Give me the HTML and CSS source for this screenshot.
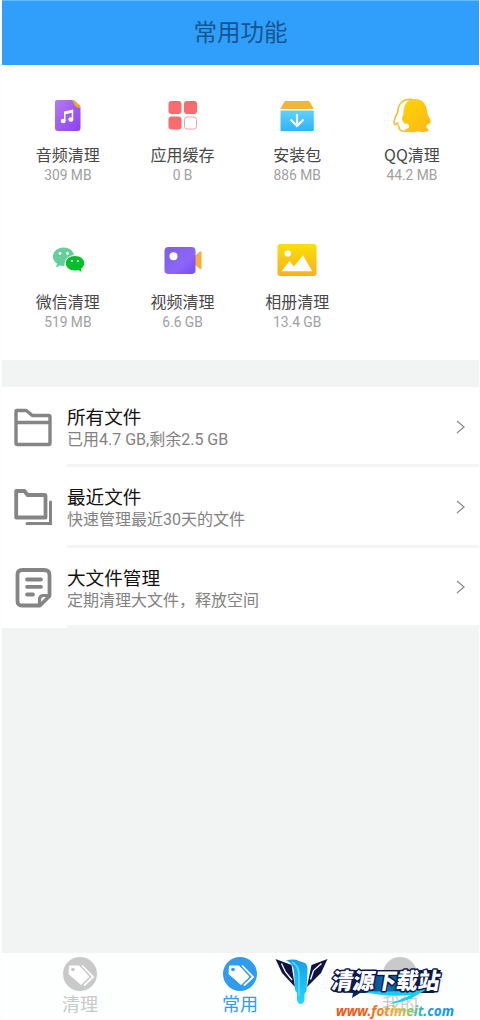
FILE: index.html
```html
<!DOCTYPE html>
<html lang="zh-CN">
<head>
<meta charset="utf-8">
<title>常用功能</title>
<link rel="stylesheet" href="styles.css">
</head>
<body>
<div class="app">
  <header class="header"><h1 class="header-title">常用功能</h1></header>
  <section class="tools">
    <div class="tool">
      <svg class="tool-icon" viewBox="0 0 48 40"><defs><linearGradient id="gp" x1="0" y1="0" x2="1" y2="1"><stop offset="0" stop-color="#b47bf2"/><stop offset="1" stop-color="#8c3ff2"/></linearGradient></defs><path fill="url(#gp)" d="M13 5h15l8.500 8v20q0 3-3 3H14q-3 0-3-3V7q0-2 2-2z"/><path fill="#eda52f" d="M28.500 5h1.500l6.500 6v2h-1.500q-5-1-6.500-8z"/><g fill="#fff"><ellipse cx="19.200" cy="26" rx="2.500" ry="2.200"/><ellipse cx="26.800" cy="24.500" rx="2.500" ry="2.200"/><path d="M20 16.500l9.200-2V24.500h-1.500v-6.700l-6.200 1.400V26H20z"/></g></svg>
      <span class="tool-name">音频清理</span><span class="tool-size">309 MB</span>
    </div>
    <div class="tool">
      <svg class="tool-icon" viewBox="0 0 48 40"><g fill="#f96b6e"><rect x="9.500" y="6" width="13" height="13" rx="3"/><rect x="25" y="6" width="13" height="13" rx="3"/><rect x="9.500" y="21.500" width="13" height="13" rx="3"/></g><rect x="25.500" y="22" width="12" height="12" rx="2.600" fill="#fff" stroke="#f7a0a2"/></svg>
      <span class="tool-name">应用缓存</span><span class="tool-size">0 B</span>
    </div>
    <div class="tool">
      <svg class="tool-icon" viewBox="0 0 48 40"><defs><linearGradient id="gb" x1="0" y1="0" x2="0" y2="1"><stop offset="0" stop-color="#5ed2fb"/><stop offset="1" stop-color="#2bb5f7"/></linearGradient></defs><path fill="#f3b43a" d="M12.500 6h23q.7 0 1 .6l4.300 7.400H7.200l4.300-7.400q.3-.6 1-.6z"/><path fill="url(#gb)" d="M7.500 15.500h33.300V35q0 1-1 1H8.500q-1 0-1-1z"/><path d="M24 19v11M17.500 24.500L24 31l6.500-6.500" fill="none" stroke="#fff" stroke-width="2.200"/></svg>
      <span class="tool-name">安装包</span><span class="tool-size">886 MB</span>
    </div>
    <div class="tool">
      <svg class="tool-icon" viewBox="0 0 48 40"><defs><linearGradient id="gq" x1="0" y1="0" x2="1" y2="1"><stop offset="0" stop-color="#ffd500"/><stop offset="1" stop-color="#fbb61d"/></linearGradient></defs><path fill="#fff" stroke="#f7bd3c" stroke-width="1.600" d="M24 4.500C14 3.500 9.800 10 9.800 17c-4 7-4.500 12-3 12.500 1 .5 2-1 3-1.500 0 2 1 3 1.500 4-1 3 3 4.500 7 4.500l7-4z"/><path fill="url(#gq)" d="M27 4C18 4 15.500 11 15.500 19c-3 5-1 8 2 10 3 0 4 2 3 4-1 1-3 1-4 2 1 2.500 9 3 13 1.200 4 1.500 11 .8 11-1.200 0-1-2-1.700-2-3 0-2 1-3 2-3 3-1 3-3-1-10C39 10 35 4 27 4z"/><path fill="#fff" d="M10 28l4 2.500 4-2q3 .5 2.500 2.500 0 2-4 3-5 0-6.500-6zM43 28l-5 4 2 1 3-2z"/></svg>
      <span class="tool-name">QQ清理</span><span class="tool-size">44.2 MB</span>
    </div>
    <div class="tool">
      <svg class="tool-icon" viewBox="0 0 48 40"><path fill="#63cf9b" d="M19.500 5.500C13.500 5.500 9 9.500 9 14.500c0 3 1.500 5.500 4 7l-1 4 4-2q2 .6 4.500.4c-.5-7 5-11 9.500-11C29 8.500 25 5.500 19.500 5.500z"/><path fill="#04bf2b" d="M31 14c-5.500 0-9.200 3.200-9.200 7.300s3.700 7.200 9.200 7.200q2 0 3.500-.5l3 2-.5-3.300c2-1.300 3.300-3.200 3.300-5.400 0-4.100-3.800-7.300-9.300-7.300z"/><g fill="#fff"><circle cx="16" cy="11.500" r="1.400"/><circle cx="23.500" cy="11.500" r="1.400"/><circle cx="28" cy="19" r="1.100"/><circle cx="33.800" cy="19" r="1.100"/></g></svg>
      <span class="tool-name">微信清理</span><span class="tool-size">519 MB</span>
    </div>
    <div class="tool">
      <svg class="tool-icon" viewBox="0 0 48 40"><defs><linearGradient id="gv" x1="0" y1="0" x2="1" y2="1"><stop offset="0" stop-color="#805ee0"/><stop offset=".6" stop-color="#8c65f8"/><stop offset="1" stop-color="#7a4bf4"/></linearGradient></defs><path fill="#f4af38" d="M35 14.500l6-5q1.500-.5 1.500 1v15.500q0 1.500-1.500 1l-6-4.500z"/><rect x="5.500" y="5" width="31" height="27" rx="4" fill="url(#gv)"/><circle cx="14.500" cy="14.300" r="4" fill="#fff"/></svg>
      <span class="tool-name">视频清理</span><span class="tool-size">6.6 GB</span>
    </div>
    <div class="tool">
      <svg class="tool-icon" viewBox="0 0 48 40"><defs><linearGradient id="gy" x1="0" y1="0" x2="0" y2="1"><stop offset="0" stop-color="#f9df0b"/><stop offset="1" stop-color="#fbb018"/></linearGradient></defs><rect x="4.500" y="2" width="39" height="32" rx="3" fill="url(#gy)"/><g fill="#fff"><circle cx="14.800" cy="11.500" r="3.200"/><path d="M8.500 29.300L16.500 19l4.500 5.500 9-11.300 9.300 16.100z"/></g></svg>
      <span class="tool-name">相册清理</span><span class="tool-size">13.4 GB</span>
    </div>
  </section>
  <ul class="files">
    <li class="file">
      <svg class="file-icon" viewBox="0 0 40 40" fill="none" stroke="#858585" stroke-width="3.400" stroke-linejoin="round"><path d="M3.800 3.500h9.500l6 5h16.200q1.500 0 1.500 1.500v26q0 1.500-1.500 1.500h-31q-1.500 0-1.500-1.500V5q0-1.500 .8-1.500zM3 15.500h34"/></svg>
      <div class="file-body"><div class="file-text"><span class="file-name">所有文件</span><span class="file-note">已用4.7 GB,剩余2.5 GB</span></div>
      <svg class="chevron" viewBox="0 0 10 14"><path d="M1 1l7 6-7 6"/></svg></div>
    </li>
    <li class="file">
      <svg class="file-icon" viewBox="0 0 40 40" fill="none" stroke="#858585" stroke-width="3.800" stroke-linejoin="round"><path d="M3.200 4h8.300l3 4H31.500q1 0 1 1v21.500H3.200z"/><path d="M14 36.500h23.500V15" stroke-linejoin="miter" stroke-width="3" stroke-linecap="round"/></svg>
      <div class="file-body"><div class="file-text"><span class="file-name">最近文件</span><span class="file-note">快速管理最近30天的文件</span></div>
      <svg class="chevron" viewBox="0 0 10 14"><path d="M1 1l7 6-7 6"/></svg></div>
    </li>
    <li class="file">
      <svg class="file-icon" viewBox="0 0 40 40" fill="none" stroke="#858585" stroke-width="3.800" stroke-linejoin="round" stroke-linecap="round"><path d="M9 2h22q5.500 0 5.500 5V28L27 37.500H9q-4.500 0-4.500-4.500V6.500Q4.500 2 9 2zM14 11.500h14M14 18.800h14M14 26.500h6"/><path d="M26.500 37v-5.500q0-4 4-4h5.500" stroke-width="3.200"/></svg>
      <div class="file-body"><div class="file-text"><span class="file-name">大文件管理</span><span class="file-note">定期清理大文件，释放空间</span></div>
      <svg class="chevron" viewBox="0 0 10 14"><path d="M1 1l7 6-7 6"/></svg></div>
    </li>
  </ul>
  <nav class="tabs">
    <div class="tab">
      <svg class="tab-icon" viewBox="0 0 34 34"><circle cx="17" cy="17" r="17" fill="currentColor"/><path fill="#fff" stroke="#fff" stroke-linejoin="round" d="M6.500 9h9.500L26 19.800 18 27.500 6 17z"/><path fill="none" stroke="#fff" stroke-width="1.800" d="M19 8.500L30 20 21 28.500"/><circle cx="10" cy="12.500" r="1.800" fill="currentColor"/></svg>
      <span>清理</span>
    </div>
    <div class="tab tab-active">
      <svg class="tab-icon" viewBox="0 0 34 34"><circle cx="17" cy="17" r="17" fill="currentColor"/><path fill="#fff" stroke="#fff" stroke-linejoin="round" d="M6.500 9h9.500L26 19.800 18 27.500 6 17z"/><path fill="none" stroke="#fff" stroke-width="1.800" d="M19 8.500L30 20 21 28.500"/><circle cx="10" cy="12.500" r="1.800" fill="currentColor"/></svg>
      <span>常用</span>
    </div>
    <div class="tab">
      <svg class="tab-icon" viewBox="0 0 34 34"><circle cx="17" cy="17" r="17" fill="currentColor"/></svg>
      <span>我的</span>
    </div>
  </nav>
  <svg class="site-mark" viewBox="270 950 210 70">
    <defs>
      <linearGradient id="mp" x1="0" y1="0" x2="1" y2="0"><stop offset="0" stop-color="#07164a"/><stop offset=".25" stop-color="#08245c"/><stop offset=".5" stop-color="#087ac0"/><stop offset=".75" stop-color="#0a2355"/><stop offset="1" stop-color="#07123f"/></linearGradient>
      <linearGradient id="mu" gradientUnits="userSpaceOnUse" x1="337" y1="0" x2="453" y2="0"><stop offset="0" stop-color="#f4501a"/><stop offset=".28" stop-color="#f65f14"/><stop offset=".5" stop-color="#f7b02c"/><stop offset=".64" stop-color="#83c96a"/><stop offset=".75" stop-color="#20a9df"/><stop offset="1" stop-color="#168ee6"/></linearGradient>
      <linearGradient id="mw" x1="0" y1="0" x2="0" y2="1"><stop offset="0" stop-color="#179fe9"/><stop offset="1" stop-color="#20d9fa"/></linearGradient>
    </defs>
    <path fill="#10133f" d="M275.500 959l16 6 3.500 22-13-14z"/>
    <path fill="#10133f" d="M327.500 959l-16 6-4.500 22 14-14z"/>
    <path d="M281.500 963.500l4 8.500 6.500 8M321.500 963.500l-8 7-3 9" fill="none" stroke="#fff" stroke-width="1.300"/>
    <path fill="url(#mw)" d="M286 960.500q8-2 13 .5l6 2q3 2 2.500 8l-1 20-2 3v6q-1 4-4 4-3 0-3.500-5v-6l-2-3-1-19q-1-8-8-10.500z"/>
    <path d="M292 962q7 3 7 14v20" fill="none" stroke="#5fd8fb" stroke-width="1.500"/>
    <path fill="url(#mp)" d="M337 970h104l-7 23h-74l-8 5 1-5-19-1z"/>
    <path fill="#13cff5" d="M357 990q37 4 72-2l-17 10q-12 5-23 6 13-5 22-9-28 3-54-5z"/>
    <text class="mark-name" x="332" y="989.500" textLength="108" lengthAdjust="spacingAndGlyphs" transform="translate(173 0) skewX(-10)">清源下载站</text>
    <text class="mark-url" x="336" y="1016" textLength="118" lengthAdjust="spacingAndGlyphs" fill="url(#mu)">www.fotimeit.com</text>
  </svg>
</div>
</body>
</html>
```
FILE: styles.css
```css
* { box-sizing: border-box; }
body { margin: 0; background: #fff; font-family: "Noto Sans CJK SC", sans-serif; }
.app { position: relative; width: 480px; height: 1020px; display: flex; flex-direction: column; background: #f1f4f3; border-left: 2px solid #fcfdfd; border-right: 1px solid #fcfdfd; overflow: hidden; }
.header { height: 65px; margin: 0 -1px; flex: none; display: flex; align-items: center; justify-content: center; background: #309ffc; border-top: 1px solid #62bbfc; padding-bottom: 4px; }
.header-title { margin: 0; font-size: 23.5px; font-weight: 400; line-height: 34px; color: #17558f; }
.tools { height: 295px; flex: none; background: #fff; display: grid; grid-template-columns: repeat(4, 114.700px); grid-auto-rows: 147.300px; padding: 30px 9px 0 8.500px; }
.tool { display: flex; flex-direction: column; align-items: center; }
.tool-icon { width: 48px; height: 40px; margin-bottom: 7px; }
.tool-name { font-size: 16px; line-height: 24px; color: #484848; }
.tool-size { font-family: Roboto, "Noto Sans CJK SC", sans-serif; font-size: 13.8px; font-weight: 400; line-height: 19px; color: #a0a0a0; }
.files { list-style: none; margin: 27px 0 0; padding: 0; flex: none; }
.file { display: flex; height: 80.330px; padding-left: 11px; background: #fff; }
.file-icon { width: 40px; height: 40px; margin: 20px 14px 0 0; flex: none; }
.file-body { flex: 1; display: flex; align-items: center; justify-content: space-between; padding-right: 13px; border-bottom: 3px solid #f3f4f4; }
.file-text { display: flex; flex-direction: column; padding-top: 4px; }
.file-name { font-size: 18.600px; line-height: 25px; color: #111; }
.file-note { font-family: Roboto, "Noto Sans CJK SC", sans-serif; font-size: 16px; font-weight: 400; line-height: 24px; color: #828282; }
.chevron { width: 10px; height: 14px; margin-top: 2px; fill: none; stroke: #8e8e8e; stroke-width: 1.3; }
.tabs { height: 67px; margin: auto -1px 0 -2px; flex: none; display: grid; grid-template-columns: repeat(3, 1fr); background: #fdfefe; }
.tab { display: flex; flex-direction: column; align-items: center; padding-top: 4px; color: #c9c9c9; font-size: 18px; font-weight: 400; line-height: 24px; }
.tab-icon { width: 34px; height: 34px; flex: none; }
.tab-active { color: #309cef; }
.site-mark { position: absolute; left: 268px; top: 950px; width: 210px; height: 70px; }
.mark-name { font: 900 22.500px "Noto Sans CJK SC", sans-serif; fill: #fff; stroke: #0b1748; stroke-width: 3px; stroke-linejoin: round; paint-order: stroke; }
.mark-url { font: italic 700 15px "Noto Sans", sans-serif; }
```
